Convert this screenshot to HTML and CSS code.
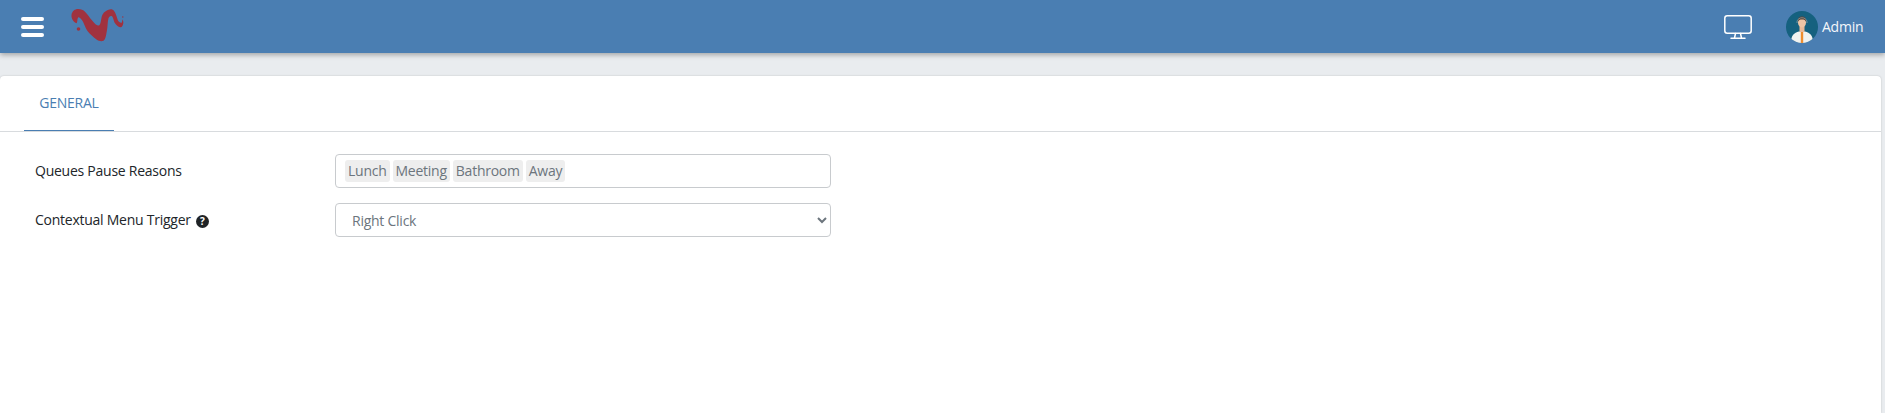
FILE: index.html
```html
<!DOCTYPE html>
<html lang="en">

<head>
    <meta charset="UTF-8" />
    <meta name="viewport" content="width=device-width, initial-scale=1.0" />
    <title>Settings</title>
    <link rel="stylesheet" href="styles.css">
</head>

<body>
    <header class="topbar">
        <div class="topbar-left">
            <button class="menu-toggle" type="button" aria-label="Menu">
                <span></span>
                <span></span>
                <span></span>
            </button>
            <svg class="logo" width="54" height="34" viewBox="0 0 54 34">
                <path fill="#a0323f" d="M0.500 7 C1 3 4 1 7 1 C10 1 12.500 2 14 3.700 C19 9 24 18 28 17.500 C29.800 16 29.700 13 30.700 8.700 C31.500 6 32.500 4.800 34 3.700 C36 2 38.500 1 40.700 1.300 C43.500 2 44.800 6 45.700 8.700 C46.300 10.500 47 13 48 13.700 C49.300 14.800 50.500 15 50.700 14.700 C51.200 14 51.200 12.500 51.300 11.300 C52 12.500 52.600 14 52.300 15.300 C52 17.500 51 19.300 49.700 19.300 C47.500 19.300 45.500 17.500 44 15.300 C42.800 13.300 42 8.500 40.700 8 C39 7.500 38 9 37.500 10.300 C36.500 14 36.800 18 36 22 C35.300 26 34.800 31 32.500 32.800 C30.500 33.700 27.500 33 25.500 31.500 C22 28.800 18.800 26 16.500 23 C14 19.500 12.500 13 10 11 C9 10 8 9 7.300 9.300 C6 10.500 6.700 13.500 5.700 15.300 C3.800 14.800 2.500 13.500 1.700 12 C0.800 10.500 0.300 8.500 0.500 7 Z" />
                <circle fill="#a0323f" cx="7.500" cy="21" r="1.800" />
                <circle fill="#a0323f" cx="51.800" cy="9" r="0.700" />
            </svg>
        </div>
        <div class="topbar-right">
            <svg class="monitor" width="28" height="24" viewBox="0 0 28 24" fill="none" stroke="#fff" stroke-width="1.500" stroke-linecap="round" stroke-linejoin="round">
                <rect x="0.800" y="0.800" width="26.400" height="17.400" rx="2.500" />
                <path d="M11.500 18.500 L10.500 23 M16.500 18.500 L17.500 23 M7 23.200 H21" />
            </svg>
            <div class="user">
                <svg class="avatar" width="32" height="32" viewBox="0 0 32 32">
                    <defs>
                        <clipPath id="avatarClip">
                            <circle cx="16" cy="16" r="16" />
                        </clipPath>
                    </defs>
                    <g clip-path="url(#avatarClip)">
                        <rect width="32" height="32" fill="#15617f" />
                        <path fill="#f1f2f0" d="M5 32 C5 24 8 22 13 20.500 H19 C24 22 27 24 27 32 Z" />
                        <rect x="14.800" y="20" width="2.400" height="12" fill="#ef8d2e" />
                        <rect x="13.500" y="14" width="5" height="7" fill="#e8b998" />
                        <ellipse cx="16" cy="11.500" rx="4" ry="5" fill="#edc4a5" />
                        <path fill="#5b4033" d="M11.800 11 C11.500 6.500 14 5.500 16 5.500 C18 5.500 20.500 6.500 20.200 11 C19.500 9 18 8.500 16 8.500 C14 8.500 12.500 9 11.800 11 Z" />
                        <path fill="none" stroke="#8fa3a8" stroke-width="0.800" d="M11 12 C10.500 5 21.500 5 21 12" />
                    </g>
                </svg>
                <span class="user-name">Admin</span>
            </div>
        </div>
    </header>

    <main class="card">
        <nav class="tabs">
            <a class="tab active" href="#">GENERAL</a>
        </nav>
        <form class="settings">
            <div class="form-row">
                <label class="form-label">Queues Pause Reasons</label>
                <div class="tags-input">
                    <span class="tag">Lunch</span>
                    <span class="tag">Meeting</span>
                    <span class="tag">Bathroom</span>
                    <span class="tag">Away</span>
                </div>
            </div>
            <div class="form-row">
                <label class="form-label" for="menuTrigger">Contextual Menu Trigger<span class="help">?</span></label>
                <select class="form-select" id="menuTrigger">
                    <option>Right Click</option>
                    <option>Left Click</option>
                </select>
            </div>
        </form>
    </main>
</body>

</html>
```

FILE: styles.css
```css
* {
    box-sizing: border-box;
    margin: 0;
    padding: 0;
}

body {
    font-family: 'Open Sans', sans-serif;
    font-size: 14px;
    letter-spacing: -0.25px;
    background: #e9ecef;
    color: #212529;
    height: 100vh;
    overflow: hidden;
    display: flex;
    flex-direction: column;
}

.topbar {
    height: 53px;
    flex-shrink: 0;
    background: #4a7eb2;
    box-shadow: 0 2px 5px rgba(0, 0, 0, 0.3);
    display: flex;
    justify-content: space-between;
    align-items: center;
    padding: 0 22px 0 21px;
}

.topbar-left,
.topbar-right,
.user {
    display: flex;
    align-items: center;
}

.menu-toggle {
    width: 23px;
    display: flex;
    flex-direction: column;
    gap: 4.500px;
    margin-top: 1px;
    background: none;
    border: none;
}

.menu-toggle span {
    height: 3.500px;
    border-radius: 2px;
    background: #fff;
}

.logo {
    margin-left: 27px;
    margin-top: -3px;
}

.monitor {
    margin-right: 34px;
    margin-top: 0;
}

.user {
    gap: 4px;
}

.user-name {
    width: 41px;
    color: #f4f7fa;
    font-weight: 400;
    font-size: 14px;
}

.card {
    flex: 1;
    margin: 23px 4px 0 0;
    background: #fff;
    border-radius: 4px 4px 0 0;
    box-shadow: 0 0 2px rgba(0, 0, 0, 0.2);
}

.tabs {
    height: 56px;
    padding-left: 24px;
    border-bottom: 1px solid #d8dbde;
    display: flex;
}

.tab {
    width: 90px;
    height: 55px;
    line-height: 53px;
    text-align: center;
    color: #4a7eb2;
    text-decoration: none;
    border-bottom: 1px solid #4a7eb2;
}

.settings {
    padding: 22px 0 0 35px;
    display: flex;
    flex-direction: column;
    gap: 15px;
}

.form-row {
    display: flex;
    align-items: center;
}

.form-label {
    width: 300px;
    color: #212529;
    margin-top: -1px;
}

.help {
    display: inline-block;
    width: 13px;
    height: 13px;
    margin-left: 5px;
    border-radius: 50%;
    background: #1f2326;
    color: #fff;
    font-size: 10px;
    font-weight: 700;
    line-height: 13px;
    letter-spacing: 0;
    text-align: center;
    vertical-align: 0;
}

.tags-input,
.form-select {
    width: 496px;
    height: 34px;
    border: 1px solid #c8cbce;
    border-radius: 4px;
    background: #fff;
}

.tags-input {
    display: flex;
    align-items: center;
    gap: 3px;
    padding-left: 9px;
}

.tag {
    height: 22px;
    line-height: 22px;
    padding: 0 3px;
    border-radius: 3px;
    background: #eeeeee;
    color: #6c757d;
}

.form-select {
    padding: 0 12px;
    color: #6c757d;
    font-family: inherit;
    font-size: 14px;
    letter-spacing: -0.25px;
}
```
